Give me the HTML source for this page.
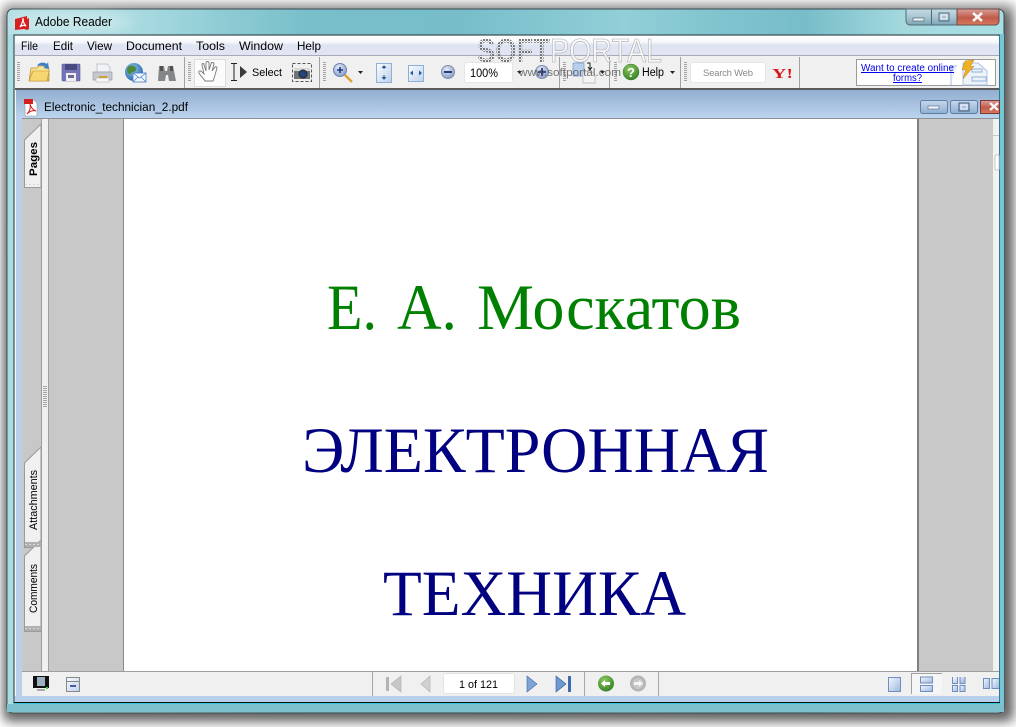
<!DOCTYPE html>
<html><head><meta charset="utf-8"><title>Adobe Reader</title>
<style>html,body{margin:0;padding:0;background:#fff;width:1016px;height:727px;overflow:hidden}svg{display:block}text{font-family:"Liberation Sans",sans-serif;fill:#000}</style></head>
<body>
<svg width="1016" height="727" viewBox="0 0 1016 727" xmlns="http://www.w3.org/2000/svg">
<defs>
<filter id="sh" x="-5%" y="-5%" width="110%" height="110%"><feGaussianBlur stdDeviation="5"/></filter>
<filter id="glow" x="-20%" y="-50%" width="140%" height="200%"><feGaussianBlur stdDeviation="6"/></filter>
<linearGradient id="teal" x1="0" x2="1" y1="0" y2="0">
<stop offset="0" stop-color="#b4e0e4"/><stop offset=".14" stop-color="#a6d9df"/><stop offset=".22" stop-color="#8ecbd4"/><stop offset=".3" stop-color="#78bfca"/><stop offset=".45" stop-color="#76bdc9"/><stop offset=".62" stop-color="#92cfd8"/><stop offset=".72" stop-color="#7fc3ce"/><stop offset=".8" stop-color="#77bdc9"/><stop offset=".9" stop-color="#a4d9de"/><stop offset="1" stop-color="#a8dfe4"/></linearGradient>
<linearGradient id="menu" x1="0" x2="0" y1="0" y2="1"><stop offset="0" stop-color="#fff"/><stop offset=".3" stop-color="#f6f8fc"/><stop offset=".45" stop-color="#dfe4f2"/><stop offset="1" stop-color="#e1e5f3"/></linearGradient>
<linearGradient id="doc" x1="0" x2="0" y1="0" y2="1"><stop offset="0" stop-color="#92aecf"/><stop offset="1" stop-color="#bcd4ee"/></linearGradient>
<linearGradient id="btn" x1="0" x2="0" y1="0" y2="1"><stop offset="0" stop-color="#c6dbe4"/><stop offset=".5" stop-color="#a9c6d2"/><stop offset="1" stop-color="#7da4b4"/></linearGradient>
<linearGradient id="red" x1="0" x2="0" y1="0" y2="1"><stop offset="0" stop-color="#d9a09a"/><stop offset=".55" stop-color="#c05a4a"/><stop offset="1" stop-color="#d87a5c"/></linearGradient>
<linearGradient id="dbtn" x1="0" x2="0" y1="0" y2="1"><stop offset="0" stop-color="#c8d8ec"/><stop offset="1" stop-color="#8eaed0"/></linearGradient>
<linearGradient id="bluepg" x1="0" x2="1" y1="0" y2="1"><stop offset="0" stop-color="#f4f7fc"/><stop offset="1" stop-color="#9db8de"/></linearGradient>
<linearGradient id="fit" x1="0" x2="1" y1="0" y2="1"><stop offset="0" stop-color="#fbfcfe"/><stop offset="1" stop-color="#bcd0ec"/></linearGradient>
<linearGradient id="fold" x1="0" x2="0" y1="0" y2="1"><stop offset="0" stop-color="#fff2a8"/><stop offset="1" stop-color="#e3b040"/></linearGradient>
<radialGradient id="gl" cx=".4" cy=".35" r=".7"><stop offset="0" stop-color="#8fd0e8"/><stop offset="1" stop-color="#2a5fb0"/></radialGradient>
<radialGradient id="grn" cx=".4" cy=".3" r=".8"><stop offset="0" stop-color="#8cc860"/><stop offset="1" stop-color="#2f7a20"/></radialGradient>
<radialGradient id="cir" cx=".4" cy=".3" r=".8"><stop offset="0" stop-color="#e4eaf6"/><stop offset="1" stop-color="#7f94c0"/></radialGradient>
<pattern id="dots" width="3" height="3" patternUnits="userSpaceOnUse"><rect width="2" height="2" fill="#777"/><rect x="2" y="2" width="1" height="1" fill="#bbb"/></pattern>
<pattern id="grip" width="3" height="2" patternUnits="userSpaceOnUse"><rect width="3" height="1" fill="#a4a4a4"/></pattern>
<pattern id="hgrip" width="4" height="3" patternUnits="userSpaceOnUse"><rect x="1" y="1" width="2" height="1" fill="#d8d8d8"/></pattern>
</defs>

<!-- outer shadow -->
<rect x="0" y="0" width="1016" height="727" fill="#fff"/>
<rect x="2" y="2" width="1014" height="722" rx="8" fill="#b8b8b8" filter="url(#sh)"/>
<rect x="5" y="11" width="1006" height="708" rx="6" fill="#2a2a2a" opacity=".62" filter="url(#sh)"/>

<!-- window frame -->
<rect x="7" y="9" width="997" height="704" rx="6" fill="url(#teal)" stroke="#3a4a50" stroke-width="1"/>
<ellipse cx="72" cy="22" rx="62" ry="11" fill="#fff" opacity=".32" filter="url(#glow)"/>
<rect x="8" y="34" width="6" height="672" fill="#a2dbe0" opacity=".55"/>
<rect x="999" y="34" width="5" height="670" fill="#76c6d6"/>
<rect x="999" y="34" width="1" height="670" fill="#34c6da"/>
<rect x="7" y="704" width="997" height="8" fill="#7cc1cd"/>

<!-- client -->
<rect x="14" y="35" width="985" height="668" fill="#eef0f2" stroke="#20343a" stroke-width="1"/>
<rect x="15" y="36" width="984" height="20" fill="url(#menu)"/>
<rect x="15" y="55" width="984" height="1" fill="#a9a9b8"/>
<rect x="15" y="56" width="984" height="32" fill="#f0f0f0"/>
<rect x="15" y="88" width="984" height="2" fill="#5a5a5a"/>

<!-- menus -->
<g font-size="12">
<text x="21" y="50" textLength="17" lengthAdjust="spacingAndGlyphs">File</text>
<text x="53" y="50" textLength="20" lengthAdjust="spacingAndGlyphs">Edit</text>
<text x="87" y="50" textLength="25" lengthAdjust="spacingAndGlyphs">View</text>
<text x="126" y="50" textLength="56" lengthAdjust="spacingAndGlyphs">Document</text>
<text x="196" y="50" textLength="29" lengthAdjust="spacingAndGlyphs">Tools</text>
<text x="239" y="50" textLength="44" lengthAdjust="spacingAndGlyphs">Window</text>
<text x="297" y="50" textLength="24" lengthAdjust="spacingAndGlyphs">Help</text>
</g>

<!-- title -->
<text x="35" y="26" font-size="12.5" textLength="77" lengthAdjust="spacingAndGlyphs">Adobe Reader</text>
<path d="M15 19l12-3v3l2-1v11l-2 1-3-1-9 1z" fill="#d92020"/>
<path d="M20 27c2-3 3-6 3-9 0 3 1 6 3 8-2-1-4-1-6 1z" fill="none" stroke="#fff" stroke-width="1.2"/>

<!-- window buttons -->
<path d="M906 9h93v12a4 4 0 0 1-4 4h-85a4 4 0 0 1-4-4z" fill="url(#btn)" stroke="#4f6a78"/>
<path d="M957 9h42v12a4 4 0 0 1-4 4h-38z" fill="url(#red)" stroke="#6d4a48"/>
<line x1="931.5" y1="9" x2="931.5" y2="25" stroke="#4f6a78"/>
<rect x="913" y="18" width="11" height="3" fill="#eef3f6" stroke="#4f6a78" stroke-width=".7"/>
<rect x="939" y="13" width="10" height="8" fill="none" stroke="#3f5a68" stroke-width=".8"/><rect x="941" y="15" width="6" height="4" fill="none" stroke="#eef" stroke-width="1.2"/>
<path d="M973 13l9 8m0-8l-9 8" stroke="#f6f6f6" stroke-width="2.6"/>

<!-- toolbar separators -->
<g fill="#a2a2a2"><rect x="184" y="57" width="1" height="31"/><rect x="319" y="57" width="1" height="31"/><rect x="559" y="57" width="1" height="31"/><rect x="609" y="57" width="1" height="31"/><rect x="680" y="57" width="1" height="31"/><rect x="799" y="57" width="1" height="31"/></g>
<g fill="url(#grip)"><rect x="17" y="62" width="3" height="20"/><rect x="188" y="62" width="3" height="20"/><rect x="323" y="62" width="3" height="20"/><rect x="563" y="62" width="3" height="20"/><rect x="614" y="62" width="3" height="20"/><rect x="684" y="62" width="3" height="20"/></g>

<!-- folder -->
<path d="M29 81l2-13h6l2-2h9l1 3v12z" fill="url(#fold)" stroke="#b98a28" stroke-width=".7"/>
<path d="M29 81l4-10h16l-2 10z" fill="#f6d670" stroke="#c29530" stroke-width=".6"/>
<path d="M37 66c2-4 7-4 10-2l1-2 1 7-6-1 2-1c-2-2-5-2-8-1z" fill="#3f7fc8"/>
<!-- floppy -->
<rect x="62" y="64" width="18" height="17" rx="1" fill="#7474b8" stroke="#5a5a90" stroke-width=".6"/>
<rect x="65" y="64" width="12" height="6" fill="#4a4a80"/><rect x="66" y="73" width="10" height="8" fill="#eeeef4"/><rect x="68" y="75" width="6" height="3" fill="#6a6a90"/>
<!-- printer -->
<path d="M97 64h10l3 3v5h-13z" fill="#f0f2f6" stroke="#b0b6be" stroke-width=".7"/>
<path d="M93 72h19v8H93z" fill="#c4c8ce" stroke="#9a9fa8" stroke-width=".7"/><rect x="96" y="78" width="13" height="4" fill="#f6f6f6" stroke="#aaa" stroke-width=".5"/><rect x="99" y="76" width="8" height="2" fill="#d0a030"/>
<!-- globe mail -->
<circle cx="134" cy="72" r="9" fill="url(#gl)"/><path d="M129 66c3-1 6 0 7 2s-1 4-3 4-2 3-4 2-3-6 0-8z" fill="#4c8a3c"/>
<rect x="133" y="73" width="13" height="9" fill="#f4f8fe" stroke="#3f7fc8" stroke-width=".8"/><path d="M133 73l6.500 5 6.500-5m-13 9l5-5m8 5l-5-5" fill="none" stroke="#3f7fc8" stroke-width=".7"/>
<!-- binoculars -->
<path d="M159 66h5l1 5h2l1-5h5l3 15h-7l-1-6h-2l-1 6h-7z" fill="#858688"/><path d="M160 66h3v5h-3zm10 0h3v5h-3z" fill="#505152"/>

<!-- hand -->
<rect x="194.500" y="59.500" width="31" height="27" fill="#fbfbfb" stroke="#dcdcdc"/>
<path d="M205 81c-2-3-5-6-6-8-1-2 1-3 3-1l2 2-2-9c0-2 2-2 2 0l2 6v-8c0-2 3-2 3 0l0 7 2-6c0-2 3-2 3 0l-2 7 3-4c1-1 2 0 2 1l-2 7c-1 3-1 4-2 6z" fill="#fff" stroke="#7a7a7a" stroke-width=".9"/>
<!-- select cursor -->
<path d="M231 63.500h6m-3 0v17m-3 0h6" fill="none" stroke="#222" stroke-width="1"/>
<path d="M240 66l7 6-7 6z" fill="#3a3a3a"/>
<text x="252" y="76" font-size="11" textLength="30" lengthAdjust="spacingAndGlyphs">Select</text>
<!-- camera -->
<rect x="292.500" y="63.500" width="19" height="18" fill="none" stroke="#555" stroke-dasharray="3 2"/>
<rect x="294" y="68" width="16" height="11" fill="#707478"/><rect x="294" y="68" width="16" height="3" fill="#d8d8d8"/><circle cx="303" cy="74" r="4" fill="#24447c" stroke="#222"/>

<!-- zoom -->
<circle cx="340" cy="70" r="6.500" fill="url(#cir)" stroke="#6b82b4"/>
<path d="M337 70h6m-3-3v6" stroke="#1c3a90" stroke-width="1.600"/>
<path d="M345 75l7 7" stroke="#e0a030" stroke-width="2.400"/>
<path d="M358 71h5l-2.500 3z" fill="#222"/>
<rect x="376.500" y="63.500" width="15" height="19" fill="url(#fit)" stroke="#8fb0d6"/>
<path d="M384 65l-2.500 3h5zm0 15l-2.500-3h5z" fill="#2a5a9a"/><path d="M384 67v2m0 8v-2" stroke="#2a5a9a"/>
<rect x="408.500" y="65.500" width="15" height="16" fill="url(#fit)" stroke="#8fb0d6"/>
<path d="M410 73l3-2.500v5zm12 0l-3-2.500v5z" fill="#2a5a9a"/>
<circle cx="448" cy="72" r="6.500" fill="url(#cir)" stroke="#7f8fb0"/><rect x="444" y="71" width="8" height="2" fill="#2a3a80"/>
<rect x="464.500" y="62.500" width="48" height="20" rx="2" fill="#fff" stroke="#e6e6e6"/>
<text x="470" y="77" font-size="12" textLength="28" lengthAdjust="spacingAndGlyphs">100%</text>
<path d="M517 71h5l-2.500 3z" fill="#222"/>
<circle cx="542" cy="72" r="6.500" fill="url(#cir)" stroke="#7f8fb0"/><path d="M538 72h8m-4-4v8" stroke="#2a3a80" stroke-width="1.800"/>
<!-- rotate pages -->
<path d="M573 63h11v13h-11z" fill="#b8d0ee" stroke="#6f95c8" stroke-width=".7"/>
<path d="M583 72h9l3 3v8h-12z" fill="#f4f4f4" stroke="#b0b0b0" stroke-width=".7"/>
<path d="M587 63h3v6m-2-2l2 3 2-3" fill="none" stroke="#222"/>
<path d="M600 71h5l-2.500 3z" fill="#222"/>
<!-- help -->
<circle cx="631" cy="72" r="8" fill="url(#grn)" stroke="#3a7a30" stroke-width=".5"/>
<text x="627" y="77" font-size="13" font-weight="bold" style="fill:#fff">?</text>
<text x="642" y="76" font-size="11.500" textLength="22" lengthAdjust="spacingAndGlyphs">Help</text>
<path d="M670 71h5l-2.500 3z" fill="#222"/>
<!-- search -->
<rect x="690.500" y="62.500" width="75" height="20" rx="2" fill="#fff" stroke="#e6e6e6"/>
<text x="703" y="76" font-size="9.500" textLength="50" lengthAdjust="spacing" style="fill:#8a8a8a">Search Web</text>
<text x="772" y="78" font-size="14" font-weight="bold" textLength="21" lengthAdjust="spacingAndGlyphs" style="font-family:'Liberation Serif',serif;fill:#d81818">Y!</text>
<!-- ad -->
<rect x="856.500" y="59.500" width="139" height="26" fill="#fff" stroke="#9a9a9a"/>
<path d="M951 85V66h6M963 85V63h15l9 8v14z" fill="#eef3fa" stroke="#a9c3e2"/>
<rect x="972" y="69" width="10" height="3" fill="none" stroke="#8fb0d8"/><rect x="972" y="77" width="14" height="4" fill="none" stroke="#8fb0d8"/>
<path d="M965 61l9-1-4 7 4-1-11 13 3-10-4 1z" fill="#f0b020" stroke="#c08020" stroke-width=".5"/>
<g font-size="10">
<text x="861" y="71" textLength="93" lengthAdjust="spacingAndGlyphs" text-decoration="underline" style="fill:#0000ee">Want to create online</text>
<text x="893" y="81" textLength="29" lengthAdjust="spacingAndGlyphs" text-decoration="underline" style="fill:#0000ee">forms?</text>
</g>

<!-- watermark -->
<text x="477" y="62" font-size="33" font-weight="bold" textLength="73" lengthAdjust="spacingAndGlyphs" style="fill:url(#dots)">SOFT</text>
<text x="550" y="62" font-size="33" textLength="112" lengthAdjust="spacingAndGlyphs" style="fill:#fff;fill-opacity:.65;stroke:#a8a8a8;stroke-width:.6">PORTAL</text>
<text x="519" y="76" font-size="11" textLength="102" lengthAdjust="spacingAndGlyphs" style="fill:#555;fill-opacity:.8">www.softportal.com</text>

<!-- doc window -->
<rect x="15" y="90" width="984" height="610" fill="#b8d0ec"/>
<path d="M15 90h984v28H15z" fill="url(#doc)"/>
<rect x="15" y="90" width="1" height="612" fill="#f4f8f8"/>
<rect x="22" y="118" width="977" height="1" fill="#8e8e8e"/>
<path d="M25 100h9l3 3v13H25z" fill="#fff" stroke="#9a9a9a" stroke-width=".6"/>
<path d="M24 99h9v5h-9z" fill="#d42020"/><path d="M27 114c3-3 4-6 3-10 1 4 3 6 6 7-3-1-6 0-9 3z" fill="none" stroke="#d42020" stroke-width="1"/>
<text x="44" y="111" font-size="11.500" textLength="144" lengthAdjust="spacingAndGlyphs">Electronic_technician_2.pdf</text>
<g stroke="#5f7fa8" fill="url(#dbtn)"><rect x="920.500" y="100.500" width="27" height="13" rx="2"/><rect x="950.500" y="100.500" width="27" height="13" rx="2"/></g>
<path d="M980.500 100.500h19v13h-19z" fill="url(#red)" stroke="#7a3a38"/>
<rect x="928" y="106" width="11" height="3" fill="#f0f4fa" stroke="#4f6a88" stroke-width=".6"/>
<rect x="959" y="103" width="10" height="8" fill="none" stroke="#3f5a78"/><rect x="961" y="105" width="6" height="4" fill="none" stroke="#eef" stroke-width="1.200"/>
<path d="M990 103l8 7m0-7l-8 7" stroke="#f6f6f6" stroke-width="2.400"/>

<!-- panels -->
<rect x="22" y="119" width="20" height="552" fill="#c8c8c8"/>
<rect x="42" y="119" width="6" height="552" fill="#f0f0f0"/>
<rect x="41" y="119" width="1" height="552" fill="#9e9e9e"/><rect x="48" y="119" width="1" height="552" fill="#9e9e9e"/>
<rect x="49" y="119" width="75" height="552" fill="#c8c8c8"/>
<rect x="124" y="119" width="793" height="552" fill="#fff"/>
<rect x="123" y="119" width="1" height="552" fill="#8a8a8a"/>
<rect x="917" y="119" width="2" height="552" fill="#808080"/>
<rect x="919" y="119" width="74" height="552" fill="#c8c8c8"/>
<rect x="993" y="119" width="6" height="552" fill="#f2f2f2"/>
<rect x="993" y="135" width="6" height="1" fill="#c8c8c8"/>
<rect x="995" y="155" width="4" height="15" rx="1" fill="#fff" stroke="#bbb" stroke-width=".8"/>
<rect x="43" y="385" width="4" height="23" fill="url(#grip)"/>

<!-- side tabs -->
<g fill="#f0f0f0" stroke="#9a9a9a">
<path d="M41 124L24.500 140V187.500H41z"/>
<path d="M41 447L24.500 463V547.500H41z"/>
<path d="M41 540L24.500 556V631.500H41z"/>
</g>
<rect x="25" y="183" width="16" height="4" fill="url(#hgrip)"/>
<rect x="25" y="542" width="16" height="5" fill="#b0b0b0"/><rect x="25" y="542" width="16" height="5" fill="url(#hgrip)"/>
<rect x="25" y="626" width="16" height="5" fill="#b0b0b0"/><rect x="25" y="626" width="16" height="5" fill="url(#hgrip)"/>
<text transform="translate(37 176) rotate(-90)" font-size="11" font-weight="bold" textLength="34" lengthAdjust="spacingAndGlyphs">Pages</text>
<text transform="translate(37 530) rotate(-90)" font-size="11" textLength="60" lengthAdjust="spacingAndGlyphs">Attachments</text>
<text transform="translate(37 613) rotate(-90)" font-size="11" textLength="49" lengthAdjust="spacingAndGlyphs">Comments</text>

<!-- page text -->
<text x="327" y="329" font-size="64.5" textLength="50" lengthAdjust="spacingAndGlyphs" style="font-family:'Liberation Serif',serif;fill:#008000">Е.</text>
<text x="397" y="329" font-size="64.5" textLength="60" lengthAdjust="spacingAndGlyphs" style="font-family:'Liberation Serif',serif;fill:#008000">А.</text>
<text x="477" y="329" font-size="64.5" textLength="264" lengthAdjust="spacingAndGlyphs" style="font-family:'Liberation Serif',serif;fill:#008000">Москатов</text>
<text x="302" y="472" font-size="64.5" textLength="467" lengthAdjust="spacingAndGlyphs" style="font-family:'Liberation Serif',serif;fill:#000080">ЭЛЕКТРОННАЯ</text>
<text x="383" y="615" font-size="64.5" textLength="303" lengthAdjust="spacingAndGlyphs" style="font-family:'Liberation Serif',serif;fill:#000080">ТЕХНИКА</text>

<!-- status bar -->
<rect x="22" y="671" width="977" height="25" fill="#f0f0f0"/>
<rect x="22" y="671" width="977" height="1" fill="#9e9e9e"/>
<rect x="15" y="696" width="984" height="6" fill="#b8d0ec"/>
<rect x="14" y="702" width="986" height="1" fill="#111"/>
<rect x="14" y="703" width="986" height="1" fill="#34c6da"/>
<rect x="372" y="672" width="1" height="24" fill="#a8a8a8"/><rect x="584" y="672" width="1" height="24" fill="#a8a8a8"/><rect x="658" y="672" width="1" height="24" fill="#a8a8a8"/>
<!-- monitor -->
<rect x="33" y="676" width="16" height="12" fill="#111"/><rect x="37" y="677" width="8" height="9" fill="#9fb0c0"/><rect x="46" y="687" width="2" height="2" fill="#30d040"/>
<rect x="37" y="689" width="8" height="2" fill="#aaa"/>
<rect x="66.500" y="677.500" width="13" height="14" fill="url(#fit)" stroke="#888"/><rect x="66" y="681" width="14" height="1" fill="#888"/><rect x="70" y="685" width="6" height="2" fill="#4a5aa0"/>
<!-- nav -->
<rect x="386" y="677" width="3" height="14" fill="#b4b4b4"/><path d="M401 676v16l-10-8z" fill="#c8c8c8" stroke="#aaa" stroke-width=".6"/>
<path d="M430 676v16l-9-8z" fill="#d0d0d0" stroke="#b0b0b0" stroke-width=".6"/>
<rect x="443.500" y="673.500" width="71" height="20" rx="2" fill="#fff" stroke="#e4e4e4"/>
<text x="459" y="688" font-size="11" textLength="39" lengthAdjust="spacingAndGlyphs">1 of 121</text>
<path d="M527 676v16l10-8z" fill="#7ea4d6" stroke="#3f6aa8" stroke-width=".6"/>
<path d="M556 676v16l10-8z" fill="#6e98d0" stroke="#2f5a98" stroke-width=".6"/><rect x="568" y="676" width="3" height="16" fill="#3c6cae"/>
<circle cx="606" cy="683.500" r="8" fill="url(#grn)"/><path d="M601 683.500l4-3.500v2h5v3h-5v2z" fill="#fff"/>
<circle cx="638" cy="683.500" r="8" fill="#b4b4b4"/><circle cx="638" cy="683.500" r="5.500" fill="#c8c8c8"/><path d="M643 683.500l-4-3.500v2h-5v3h5v2z" fill="#f4f4f4"/>
<!-- views -->
<rect x="888.500" y="677.500" width="12" height="14" fill="url(#bluepg)" stroke="#6b8fc0"/>
<rect x="911" y="673" width="31" height="21" fill="#f6f6f6"/><path d="M911.500 694V673.500H942" fill="none" stroke="#a0a0a0"/>
<rect x="920.500" y="677" width="12" height="6" fill="url(#bluepg)" stroke="#6b8fc0"/><rect x="920.500" y="685.500" width="12" height="6" fill="url(#bluepg)" stroke="#6b8fc0"/>
<g fill="url(#bluepg)" stroke="#6b8fc0"><path d="M952.500 677v6.500h5V677M960 677v6.500h5V677"/><rect x="952.500" y="685.500" width="5" height="6"/><rect x="960" y="685.500" width="5" height="6"/>
<rect x="983.500" y="678.500" width="6" height="10"/><path d="M999 678.500h-7v10h7"/></g>
</svg>
</body></html>
